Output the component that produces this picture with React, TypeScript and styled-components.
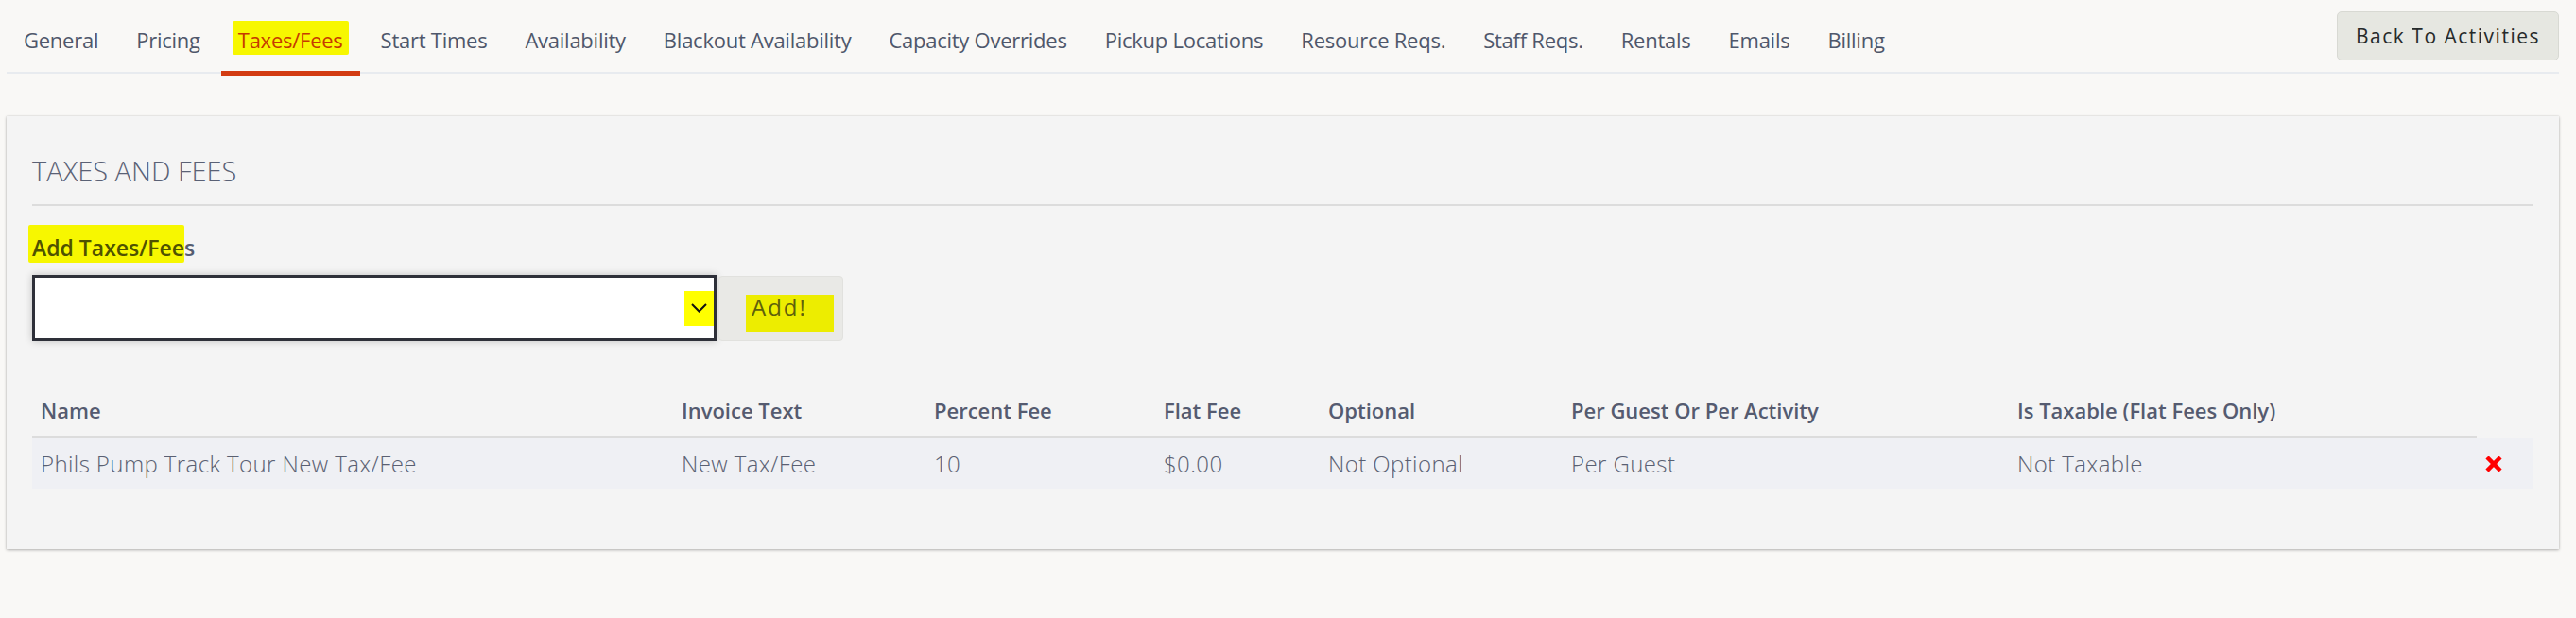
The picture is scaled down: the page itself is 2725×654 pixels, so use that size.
import styled, { createGlobalStyle } from 'styled-components'

const GlobalStyle = createGlobalStyle`
  html, body {
    margin: 0;
    padding: 0;
    background: #f9f8f6;
  }
  body {
    font-family: 'Open Sans', 'Liberation Sans', Arial, sans-serif;
    color: #525a6e;
  }
`

const Page = styled.div`
  margin: 0 18px 0 7px;
  padding-bottom: 73px;
`

const NavBar = styled.nav`
  display: flex;
  align-items: flex-end;
  height: 76px;
  border-bottom: 2px solid #e8ebef;
`

const Tab = styled.a<{ $active?: boolean }>`
  display: block;
  padding: 0 18px 18px;
  margin: 0 4px -4px 0;
  border-bottom: 5px solid ${(p) => (p.$active ? '#d33c12' : 'transparent')};
  font-size: 22px;
  line-height: 30px;
  font-weight: 500;
  letter-spacing: -0.25px;
  color: ${(p) => (p.$active ? '#c8391a' : '#4f576b')};
  text-decoration: none;
  white-space: nowrap;
`

// marker-pen highlight laid over text
const Mark = styled.span<{ $ink?: string }>`
  background: #f7f700;
  color: ${(p) => p.$ink || '#4f5200'};
  padding: 5px 6px 1px;
  margin: 0 -6px;
  border-radius: 2px;
`

const BackButton = styled.button`
  margin-left: auto;
  align-self: flex-start;
  margin-top: 12px;
  height: 52px;
  padding: 0 19px;
  background: #e6e7e1;
  border: 1px solid #d8d9d3;
  border-radius: 5px;
  font-family: inherit;
  font-size: 21px;
  font-weight: 500;
  letter-spacing: 1.5px;
  color: #262a2a;
`

const Card = styled.section`
  margin-top: 45px;
  background: #f4f4f4;
  box-shadow: 0 1px 3px rgba(0, 0, 0, 0.28), 0 0 1px rgba(0, 0, 0, 0.18);
  padding: 38px 27px 63px;
`

const Heading = styled.h2`
  margin: 0;
  font-size: 29px;
  line-height: 40px;
  font-weight: 300;
  color: #5a6175;
`

const Rule = styled.div`
  margin-top: 15px;
  height: 2px;
  background: #dcdcdc;
`

const Label = styled.label`
  display: block;
  margin-top: 29px;
  font-size: 23px;
  line-height: 30px;
  font-weight: 600;
  color: #555c70;
`

const LabelMark = styled(Mark)`
  padding: 8px 0 0 4px;
  margin: 0 0 0 -4px;
`

const FormRow = styled.div`
  display: flex;
  align-items: flex-start;
  gap: 2px;
  margin-top: 14px;
`

const SelectBox = styled.div`
  box-sizing: border-box;
  width: 724px;
  height: 70px;
  border: 3px solid #2e3039;
  background: #fff;
  box-shadow: 0 0 8px rgba(0, 0, 0, 0.22);
  display: flex;
  align-items: center;
  justify-content: flex-end;
`

const ChevronMark = styled.span`
  width: 31px;
  height: 37px;
  background: #ffff00;
  display: flex;
  align-items: center;
  justify-content: center;
`

const AddButton = styled.button`
  box-sizing: border-box;
  margin-top: 1px;
  width: 132px;
  height: 69px;
  padding: 0 0 0 28px;
  background: #e9e9e6;
  border: 1px solid #e1e1de;
  border-radius: 4px;
  display: flex;
  align-items: flex-start;
  font-family: inherit;
`

const AddMark = styled.span`
  display: inline-block;
  margin-top: 19px;
  padding: 0 28px 13px 6px;
  background: #eded00;
  font-size: 24px;
  line-height: 26px;
  letter-spacing: 2px;
  color: #5e600c;
`

const Table = styled.table`
  margin-top: 46px;
  width: 100%;
  border-collapse: separate;
  border-spacing: 0;
  table-layout: fixed;
`

const Th = styled.th<{ $thin?: boolean }>`
  text-align: left;
  padding: 12px 9px;
  font-size: 22px;
  line-height: 30px;
  font-weight: 600;
  color: #555b70;
  border-bottom: ${(p) => (p.$thin ? '1px' : '3px')} solid #dcdcdc;
  white-space: nowrap;
`

const Row = styled.tr`
  background: #eff0f4;
`

const Td = styled.td`
  padding: 11px 9px 12px;
  font-size: 24px;
  line-height: 31px;
  font-weight: 300;
  letter-spacing: 0.4px;
  color: #5a6072;
  vertical-align: middle;
  white-space: nowrap;
`

const Chevron = () => (
  <svg width="17" height="10" viewBox="0 0 17 10">
    <path d="M1 1 L8.5 8.5 L16 1" fill="none" stroke="#111" strokeWidth="2" />
  </svg>
)

const DeleteIcon = () => (
  <svg width="18" height="16" viewBox="0 0 18 16" style={{ display: 'block' }}>
    <path d="M2 1 L16 15 M16 1 L2 15" stroke="#ff0000" strokeWidth="4.5" />
  </svg>
)

const tabs = [
  'General',
  'Pricing',
  'Taxes/Fees',
  'Start Times',
  'Availability',
  'Blackout Availability',
  'Capacity Overrides',
  'Pickup Locations',
  'Resource Reqs.',
  'Staff Reqs.',
  'Rentals',
  'Emails',
  'Billing',
]

const columns = [
  { title: 'Name', width: 678 },
  { title: 'Invoice Text', width: 267 },
  { title: 'Percent Fee', width: 243 },
  { title: 'Flat Fee', width: 174 },
  { title: 'Optional', width: 257 },
  { title: 'Per Guest Or Per Activity', width: 472 },
  { title: 'Is Taxable (Flat Fees Only)', width: 495 },
]

const fees = [
  {
    name: 'Phils Pump Track Tour New Tax/Fee',
    invoice: 'New Tax/Fee',
    percent: '10',
    flat: '$0.00',
    optional: 'Not Optional',
    per: 'Per Guest',
    taxable: 'Not Taxable',
  },
]

export default function App() {
  return (
    <Page>
      <GlobalStyle />
      <NavBar>
        {tabs.map((t) =>
          t === 'Taxes/Fees' ? (
            <Tab key={t} href="#" $active>
              <Mark $ink="#c63a00">{t}</Mark>
            </Tab>
          ) : (
            <Tab key={t} href="#">
              {t}
            </Tab>
          )
        )}
        <BackButton>Back To Activities</BackButton>
      </NavBar>

      <Card>
        <Heading>TAXES AND FEES</Heading>
        <Rule />
        <Label>
          <LabelMark>Add Taxes/Fee</LabelMark>s
        </Label>
        <FormRow>
          <SelectBox>
            <ChevronMark>
              <Chevron />
            </ChevronMark>
          </SelectBox>
          <AddButton>
            <AddMark>Add!</AddMark>
          </AddButton>
        </FormRow>

        <Table>
          <colgroup>
            {columns.map((c) => (
              <col key={c.title} style={{ width: c.width }} />
            ))}
            <col />
          </colgroup>
          <thead>
            <tr>
              {columns.map((c) => (
                <Th key={c.title}>{c.title}</Th>
              ))}
              <Th $thin />
            </tr>
          </thead>
          <tbody>
            {fees.map((f) => (
              <Row key={f.name}>
                <Td>{f.name}</Td>
                <Td>{f.invoice}</Td>
                <Td>{f.percent}</Td>
                <Td>{f.flat}</Td>
                <Td>{f.optional}</Td>
                <Td>{f.per}</Td>
                <Td>{f.taxable}</Td>
                <Td>
                  <DeleteIcon />
                </Td>
              </Row>
            ))}
          </tbody>
        </Table>
      </Card>
    </Page>
  )
}
